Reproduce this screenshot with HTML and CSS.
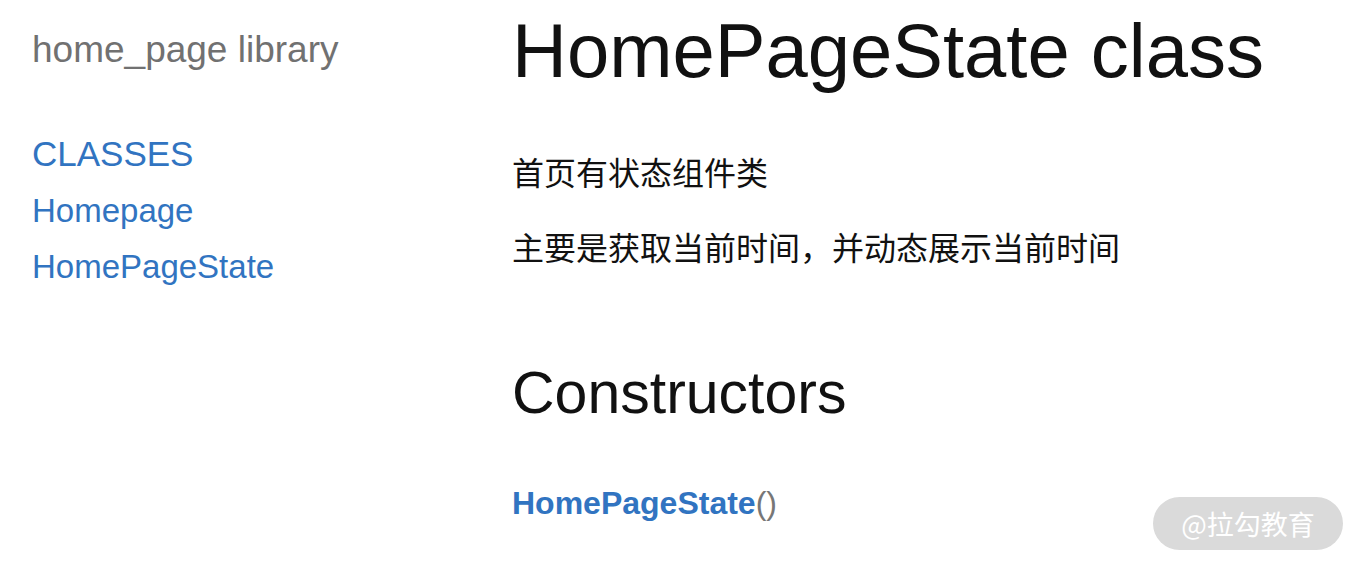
FILE: index.html
```html
<!DOCTYPE html>
<html lang="zh">
<head>
<meta charset="utf-8">
<title>HomePageState class - home_page library</title>
<link rel="stylesheet" href="styles.css">
</head>
<body>
<div class="page">
  <nav class="sidebar">
    <h5 class="lib-name">home_page library</h5>
    <h3 class="section-title"><a href="#">CLASSES</a></h3>
    <ul class="class-list">
      <li><a href="#">Homepage</a></li>
      <li><a href="#">HomePageState</a></li>
    </ul>
  </nav>
  <main class="content">
    <h1 class="title">HomePageState class</h1>
    <p class="desc">首页有状态组件类</p>
    <p class="desc">主要是获取当前时间，并动态展示当前时间</p>
    <h2 class="section">Constructors</h2>
    <div class="ctor"><a href="#">HomePageState</a><span class="parens">()</span></div>
  </main>
</div>
<div class="watermark">@拉勾教育</div>
</body>
</html>
```
FILE: styles.css
```css
html, body {
  margin: 0;
  padding: 0;
  background: #fff;
}
body {
  font-family: "Liberation Sans", Arial, "Noto Sans CJK SC", sans-serif;
  color: #111;
}
a {
  color: #3174c1;
  text-decoration: none;
}
.page {
  display: flex;
  align-items: flex-start;
}
.sidebar {
  box-sizing: border-box;
  width: 512px;
  padding: 28px 0 0 32px;
}
.lib-name {
  margin: 0;
  font-size: 37px;
  line-height: 44px;
  font-weight: normal;
  color: #717171;
}
.section-title {
  margin: 61px 0 0;
  font-size: 35px;
  line-height: 42px;
  font-weight: normal;
}
.class-list {
  list-style: none;
  margin: 8px 0 0;
  padding: 0;
}
.class-list li {
  font-size: 33px;
  line-height: 56px;
}
.content {
  flex: 1;
  padding-top: 6px;
}
.title {
  margin: 0;
  font-size: 76px;
  line-height: 90px;
  font-weight: normal;
  color: #111;
}
.desc {
  margin: 29px 0 0;
  font-family: "Noto Sans CJK SC", sans-serif;
  font-size: 32px;
  line-height: 46px;
  color: #111;
}
.title + .desc {
  margin-top: 52px;
}
.section {
  margin: 90px 0 0;
  font-size: 59px;
  line-height: 68px;
  font-weight: normal;
  color: #111;
}
.ctor {
  margin-top: 56px;
  font-size: 32px;
  line-height: 40px;
}
.ctor a {
  font-weight: bold;
}
.parens {
  color: #777;
  font-weight: normal;
}
.watermark {
  position: absolute;
  left: 1153px;
  top: 497px;
  width: 190px;
  height: 53px;
  border-radius: 27px;
  background: #dadada;
  color: #fff;
  font-family: "Noto Sans CJK SC", sans-serif;
  font-size: 27px;
  display: flex;
  align-items: center;
  justify-content: center;
}
```
